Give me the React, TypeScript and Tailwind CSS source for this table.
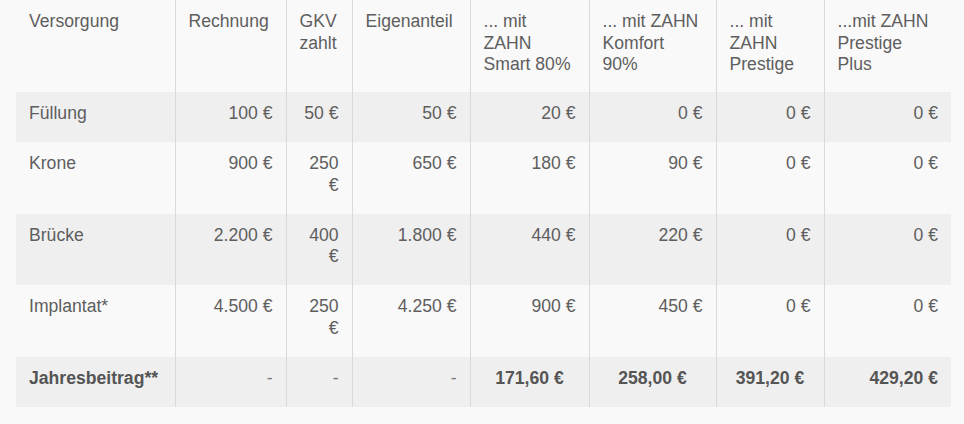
import React from "react";

type Row = { label: string; cells: string[]; shaded: boolean };

const rows: Row[] = [
  { label: "Füllung", cells: ["100 €", "50 €", "50 €", "20 €", "0 €", "0 €", "0 €"], shaded: true },
  { label: "Krone", cells: ["900 €", "250 €", "650 €", "180 €", "90 €", "0 €", "0 €"], shaded: false },
  { label: "Brücke", cells: ["2.200 €", "400 €", "1.800 €", "440 €", "220 €", "0 €", "0 €"], shaded: true },
  { label: "Implantat*", cells: ["4.500 €", "250 €", "4.250 €", "900 €", "450 €", "0 €", "0 €"], shaded: false },
];

const headers = [
  "Rechnung",
  "GKV zahlt",
  "Eigenanteil",
  "... mit ZAHN Smart 80%",
  "... mit ZAHN Komfort 90%",
  "... mit ZAHN Prestige",
  "...mit ZAHN Prestige Plus",
];

export default function App() {
  return (
    <div
      className="w-full h-[424px] bg-[#f9f9f9] pl-[16px] text-[#5e5e5e] text-[17.6px] leading-[21.5px]"
      style={{ fontFamily: '"Liberation Sans", Arial, sans-serif' }}
    >
      <table className="table-fixed border-collapse w-[935px]">
        <colgroup>
          <col className="w-[159px]" />
          <col className="w-[111px]" />
          <col className="w-[66px]" />
          <col className="w-[118px]" />
          <col className="w-[119px]" />
          <col className="w-[127px]" />
          <col className="w-[108px]" />
          <col className="w-[127px]" />
        </colgroup>
        <thead>
          <tr>
            <th className="text-left font-normal align-top px-[13px] pt-[11px] pb-[16.5px]">Versorgung</th>
            {headers.map((h) => (
              <th
                key={h}
                className="text-left font-normal align-top px-[13px] pt-[11px] pb-[16.5px] border-l border-[#d5dade]"
              >
                {h}
              </th>
            ))}
          </tr>
        </thead>
        <tbody>
          {rows.map((r) => (
            <tr key={r.label} className={r.shaded ? "bg-[#efefef]" : ""}>
              <td className="text-left align-top px-[13px] pt-[11px] pb-[17.5px]">{r.label}</td>
              {r.cells.map((c, i) => (
                <td key={i} className="text-right align-top px-[13px] pt-[11px] pb-[17.5px] border-l border-[#d5dade]">
                  {c}
                </td>
              ))}
            </tr>
          ))}
          <tr className="bg-[#efefef] text-[#555555]">
            <td className="text-left align-top px-[13px] pt-[11px] pb-[17.5px] font-bold">Jahresbeitrag**</td>
            <td className="text-right align-top px-[13px] pt-[11px] pb-[17.5px] border-l border-[#d5dade] text-[#777777]">-</td>
            <td className="text-right align-top px-[13px] pt-[11px] pb-[17.5px] border-l border-[#d5dade] text-[#777777]">-</td>
            <td className="text-right align-top px-[13px] pt-[11px] pb-[17.5px] border-l border-[#d5dade] text-[#777777]">-</td>
            <td className="text-center align-top px-[13px] pt-[11px] pb-[17.5px] border-l border-[#d5dade] font-bold">171,60 €</td>
            <td className="text-center align-top px-[13px] pt-[11px] pb-[17.5px] border-l border-[#d5dade] font-bold">258,00 €</td>
            <td className="text-center align-top px-[13px] pt-[11px] pb-[17.5px] border-l border-[#d5dade] font-bold">391,20 €</td>
            <td className="text-right align-top px-[13px] pt-[11px] pb-[17.5px] border-l border-[#d5dade] font-bold">429,20 €</td>
          </tr>
        </tbody>
      </table>
    </div>
  );
}
